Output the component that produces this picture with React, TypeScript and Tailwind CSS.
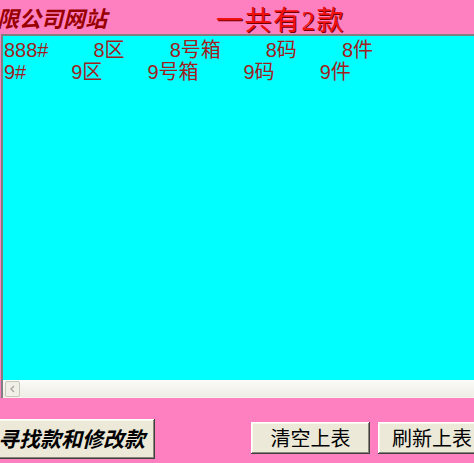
import React from "react";

const rows = [
  ["888#", "8区", "8号箱", "8码", "8件"],
  ["9#", "9区", "9号箱", "9码", "9件"],
];

const btnShadow =
  "[box-shadow:inset_-1px_-1px_#404040,inset_1px_1px_#ffffff,inset_-2px_-2px_#8a8778,inset_2px_2px_#f8f7f0]";

export default function App() {
  return (
    <div className="w-[474px] h-[463px] bg-[#ff80c0] overflow-hidden flex flex-col">
      <div className="h-[34px] flex items-center shrink-0">
        <div className="w-[219px] shrink-0 -ml-[3px] text-[22px] leading-none font-bold italic text-[#990000] [font-family:'Noto_Sans_CJK_SC',sans-serif]">
          限公司网站
        </div>
        <div className="text-[27px] leading-none tracking-[1.5px] font-normal text-[#f01010] [text-shadow:1px_1px_0_#700000] [font-family:'Liberation_Serif','Noto_Sans_CJK_SC',serif] mt-[8px]">
          一共有2款
        </div>
      </div>
      <div className="ml-[1px] w-[500px] h-[364px] shrink-0 flex flex-col border-t-2 border-l-2 border-t-[#808080] border-l-[#808080] [box-shadow:inset_1px_1px_#404040]">
        <div className="flex-1 bg-[#00ffff] pt-[3px] pl-[1px] text-[20px] leading-[22px] text-[#a02020] [font-family:'Liberation_Sans','Noto_Sans_CJK_SC',sans-serif]">
          {rows.map((r, i) => (
            <div key={i} className="flex gap-[45px] whitespace-nowrap">
              {r.map((c, j) => (
                <span key={j}>{c}</span>
              ))}
            </div>
          ))}
        </div>
        <div className="h-[18px] bg-gradient-to-b from-[#fbfbf8] to-[#eeede5] flex items-center pl-[2px] border-b border-[#f4f3ee]">
          <div className="w-[15px] h-[16px] rounded-[2px] border border-[#c9c7ba] bg-[#f0efe8] flex items-center justify-center">
            <svg width="8" height="8" viewBox="0 0 8 8">
              <path d="M5 1 L2 4 L5 7" stroke="#b0ada0" strokeWidth="1.5" fill="none" />
            </svg>
          </div>
        </div>
      </div>
      <div className="flex items-end mt-[21px]">
        <button className={`-ml-[10px] w-[165px] h-[40px] bg-[#ece9d8] ${btnShadow} text-[21px] font-bold italic text-black [font-family:'Noto_Sans_CJK_SC',sans-serif] flex items-center justify-end pr-[10px] whitespace-nowrap shrink-0`}>
          寻找款和修改款
        </button>
        <button className={`ml-[96px] w-[119px] h-[32px] mb-[5px] bg-[#ece9d8] ${btnShadow} text-[20px] font-normal text-black [font-family:'Noto_Sans_CJK_SC',sans-serif] flex items-center justify-center shrink-0`}>
          清空上表
        </button>
        <button className={`ml-[8px] w-[119px] h-[32px] mb-[5px] bg-[#ece9d8] ${btnShadow} text-[20px] font-normal text-black [font-family:'Noto_Sans_CJK_SC',sans-serif] flex items-center justify-start pl-[14px] shrink-0`}>
          刷新上表
        </button>
      </div>
    </div>
  );
}
